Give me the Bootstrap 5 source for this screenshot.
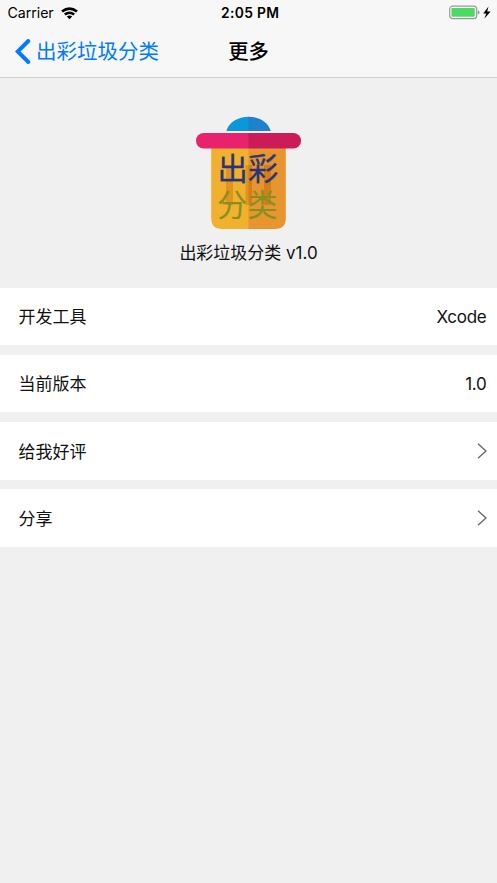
<!DOCTYPE html>
<html lang="zh-CN">
<head>
<meta charset="utf-8">
<meta name="viewport" content="width=device-width, initial-scale=1">
<title>更多</title>
<link href="https://cdn.jsdelivr.net/npm/bootstrap@5.3.0/dist/css/bootstrap.min.css" rel="stylesheet">
<style>
body{background:#f0f0f0;color:#111;font-family:Inter,"Noto Sans CJK SC",sans-serif;font-size:17px;line-height:24px;overflow:hidden}
.top-area{height:77.5px;background:#f7f7f7;border-bottom:1px solid #cfcfcf}
.status-bar{height:26px;font-size:14.2px;line-height:26px;color:#000;display:grid;grid-template-columns:1fr auto 1fr;padding:0 4px 0 7.5px}
.carrier{letter-spacing:-.05px}
.status-time{font-weight:600;font-size:13.8px;letter-spacing:.35px}
.title-bar{height:50px;display:grid;grid-template-columns:1fr auto 1fr;padding:1px 15px 0}
.back-link{color:#007aff;font-size:20.5px;line-height:50px}
.back-link svg{margin-top:-1px}
.page-title{font-size:20.3px;font-weight:500;line-height:50px;color:#000;margin:0}
.intro{height:210px;padding-top:27px}
.logo{margin-left:3.5px}
.app-name{line-height:24px;margin-top:1px;letter-spacing:-.02px}
.cell{height:57.8px;padding:0 10.5px 0 18.5px}
.cell span{padding-top:1.5px}
.cell .val{letter-spacing:-.25px}
.cells{gap:9.4px}
svg{display:block;flex:none}
</style>
</head>
<body>
<header class="top-area">
  <div class="status-bar">
    <div class="d-flex align-items-center"><span class="carrier">Carrier</span>
      <svg class="ms-1" width="21" height="13" viewBox="-3 0 21 13" fill="none" stroke="#000" stroke-width="2.6"><path d="M1 4.6Q8.5-1.4 16 4.6M3.8 7.6Q8.5 3.9 13.2 7.6"/><path d="M5.8 9.4Q8.5 7.6 11.2 9.4L8.5 12.2Z" fill="#000" stroke="none"/></svg>
    </div>
    <div class="status-time">2:05 PM</div>
    <div class="d-flex align-items-center justify-content-end">
      <svg width="44" height="16" viewBox="0 0 44 16"><rect x=".7" y="1.2" width="27" height="12.4" rx="3" fill="#fff" stroke="#999" stroke-width="1.2"/><rect x="2.4" y="3" width="23.4" height="8.8" rx="1.2" fill="#4cd964"/><path d="M28.8 5.3Q30.6 5.8 30.6 7.4T28.8 9.5Z" fill="#999"/><path d="M39.5 1.5L34.2 8.5H37.3L35.3 13.7L41.6 6.5H38.2Z" fill="#000"/></svg>
    </div>
  </div>
  <nav class="title-bar">
    <a href="#" class="back-link d-flex align-items-center text-decoration-none text-nowrap"><svg class="me-1" width="17" height="26" viewBox="0 0 17 26" fill="none" stroke="#007aff" stroke-width="3.9" stroke-linecap="round"><path d="M13.3 2L2.7 12.5L13.3 23"/></svg>出彩垃圾分类</a>
    <h1 class="page-title">更多</h1>
    <span></span>
  </nav>
</header>
<main>
  <section class="intro d-flex flex-column align-items-center">
    <svg class="logo" width="130" height="135" viewBox="0 0 130 135" role="img" aria-label="出彩分类">
      <path d="M41.3 26C44 17 53 11.7 63.7 11.7H64V26Z" fill="#0799da"/><path d="M63.5 11.7C74.5 11.7 83 17 85.8 26H63.5Z" fill="#1e81ce"/>
      <path d="M26.2 43H64V124H37Q26.2 124 26.2 113Z" fill="#f2b02f"/><path d="M63.5 43H100.8V113Q100.8 124 90 124H63.5Z" fill="#e6952f"/>
      <path d="M41 60H48V100H41ZM60.5 60H64V100H60.5Z" fill="#e0941f"/><path d="M63.5 60H67V100H63.5ZM79 60H86V100H79Z" fill="#d77d17"/>
      <path d="M64 28H18.7A7.7 7.7 0 0 0 18.7 43.5H64Z" fill="#e8226d"/><path d="M63.5 28H108.3A7.7 7.7 0 0 1 108.3 43.5H63.5Z" fill="#cb1b58"/>
      <g font-family="'Noto Sans CJK SC',sans-serif" font-size="30.3"><text x="32.6" y="75.4" fill="#293477" stroke="#293477" stroke-width=".3">出彩</text><text x="32" y="110.8" fill="#85901f">分类</text></g>
    </svg>
    <div class="app-name">出彩垃圾分类 v1.0</div>
  </section>
  <section class="cells d-flex flex-column">
    <div class="cell bg-white d-flex align-items-center justify-content-between"><span>开发工具</span><span class="val">Xcode</span></div>
    <div class="cell bg-white d-flex align-items-center justify-content-between"><span>当前版本</span><span class="val">1.0</span></div>
    <a href="#" class="cell bg-white d-flex align-items-center justify-content-between text-reset text-decoration-none"><span>给我好评</span><svg width="10" height="16" viewBox="0 0 10 16" fill="none" stroke="#666" stroke-width="1.3"><path d="M1 .7L9 8L1 15.3"/></svg></a>
    <a href="#" class="cell bg-white d-flex align-items-center justify-content-between text-reset text-decoration-none"><span>分享</span><svg width="10" height="16" viewBox="0 0 10 16" fill="none" stroke="#666" stroke-width="1.3"><path d="M1 .7L9 8L1 15.3"/></svg></a>
  </section>
</main>
<script src="https://cdn.jsdelivr.net/npm/bootstrap@5.3.0/dist/js/bootstrap.bundle.min.js"></script>
</body>
</html>
